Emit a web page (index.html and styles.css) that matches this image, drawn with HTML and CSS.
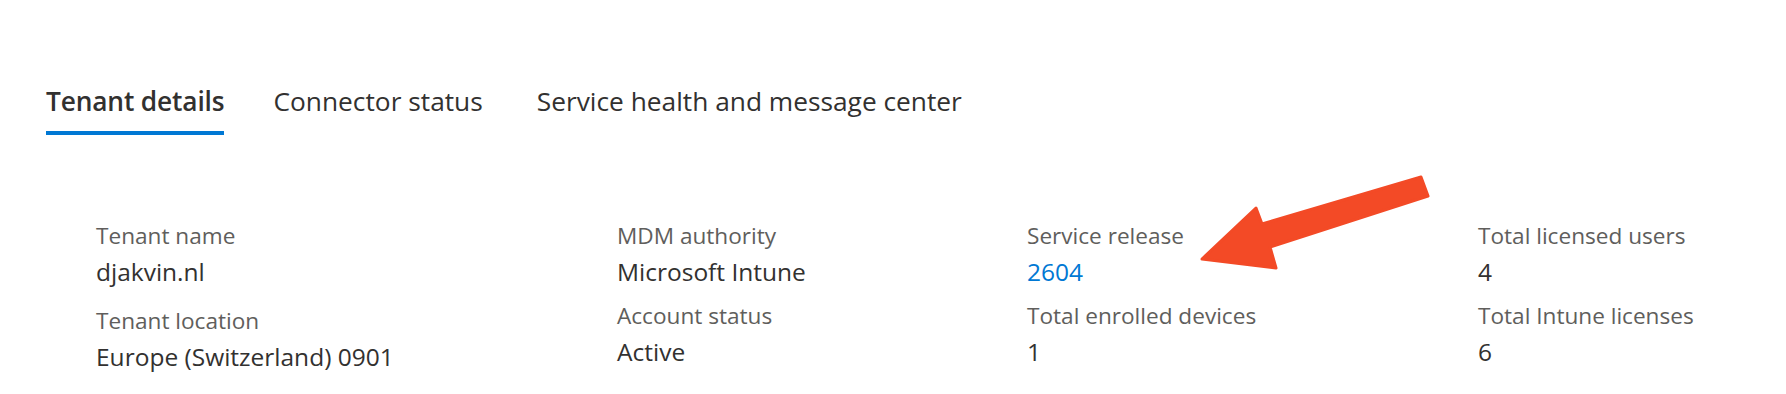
FILE: index.html
```html
<!DOCTYPE html>
<html lang="en">
<head>
    <meta charset="UTF-8">
    <meta name="viewport" content="width=device-width, initial-scale=1.0">
    <title>Tenant status</title>
    <link rel="stylesheet" href="styles.css">
</head>
<body>
    <div class="page">
        <div class="tab-list">
            <div class="tab tab-active">Tenant details</div>
            <div class="tab">Connector status</div>
            <div class="tab">Service health and message center</div>
        </div>

        <div class="details-grid">
            <div class="details-col details-col-tenant">
                <div class="detail-item">
                    <div class="detail-label">Tenant name</div>
                    <div class="detail-value">djakvin.nl</div>
                </div>
                <div class="detail-item">
                    <div class="detail-label">Tenant location</div>
                    <div class="detail-value">Europe (Switzerland) 0901</div>
                </div>
            </div>
            <div class="details-col">
                <div class="detail-item">
                    <div class="detail-label">MDM authority</div>
                    <div class="detail-value">Microsoft Intune</div>
                </div>
                <div class="detail-item">
                    <div class="detail-label">Account status</div>
                    <div class="detail-value">Active</div>
                </div>
            </div>
            <div class="details-col">
                <div class="detail-item">
                    <div class="detail-label">Service release</div>
                    <div class="detail-value"><a class="detail-link" href="#">2604</a></div>
                </div>
                <div class="detail-item">
                    <div class="detail-label">Total enrolled devices</div>
                    <div class="detail-value">1</div>
                </div>
            </div>
            <div class="details-col">
                <div class="detail-item">
                    <div class="detail-label">Total licensed users</div>
                    <div class="detail-value">4</div>
                </div>
                <div class="detail-item">
                    <div class="detail-label">Total Intune licenses</div>
                    <div class="detail-value">6</div>
                </div>
            </div>
        </div>

        <!-- annotation arrow drawn over the screenshot -->
        <svg class="arrow-overlay" viewBox="0 0 1786 394" xmlns="http://www.w3.org/2000/svg">
            <polygon points="1202,259 1256,208 1262,224 1421,177 1428,196 1270,247 1276,268"
                     fill="#f34a26" stroke="#f34a26" stroke-width="3" stroke-linejoin="round" />
        </svg>
    </div>
</body>
</html>
```

FILE: styles.css
```css
body{
    margin: 0;
    background-color: #ffffff;
    font-family: "Segoe UI", "Open Sans", sans-serif;
    color: #323130;
}
.page{
    position: relative;
    width: 1786px;
    height: 394px;
    overflow: hidden;
}
.tab-list{
    display: flex;
    gap: 54px;
    padding: 83px 0 0 46px;
}
.tab{
    font-size: 26.3px;
    line-height: 36px;
    padding-bottom: 12px;
    border-bottom: 4px solid transparent;
    color: #323130;
    white-space: nowrap;
}
.tab-active{
    font-weight: 600;
    letter-spacing: -0.15px;
    margin-right: -5px;
    border-bottom-color: #0078d4;
}
.details-grid{
    display: grid;
    grid-template-columns: 521px 410px 451px auto;
    margin-top: 86px;
    padding-left: 96px;
}
.detail-item{
    margin-bottom: 12px;
}
.details-col-tenant .detail-item{
    margin-bottom: 17px;
}
.detail-label{
    font-size: 22.6px;
    line-height: 30px;
    color: #605e5c;
}
.detail-value{
    font-size: 24.5px;
    line-height: 34px;
    margin-top: 4px;
    color: #323130;
}
.detail-link{
    color: #0078d4;
    text-decoration: none;
}
.arrow-overlay{
    position: absolute;
    left: 0;
    top: 0;
    width: 1786px;
    height: 394px;
    pointer-events: none;
}
```
